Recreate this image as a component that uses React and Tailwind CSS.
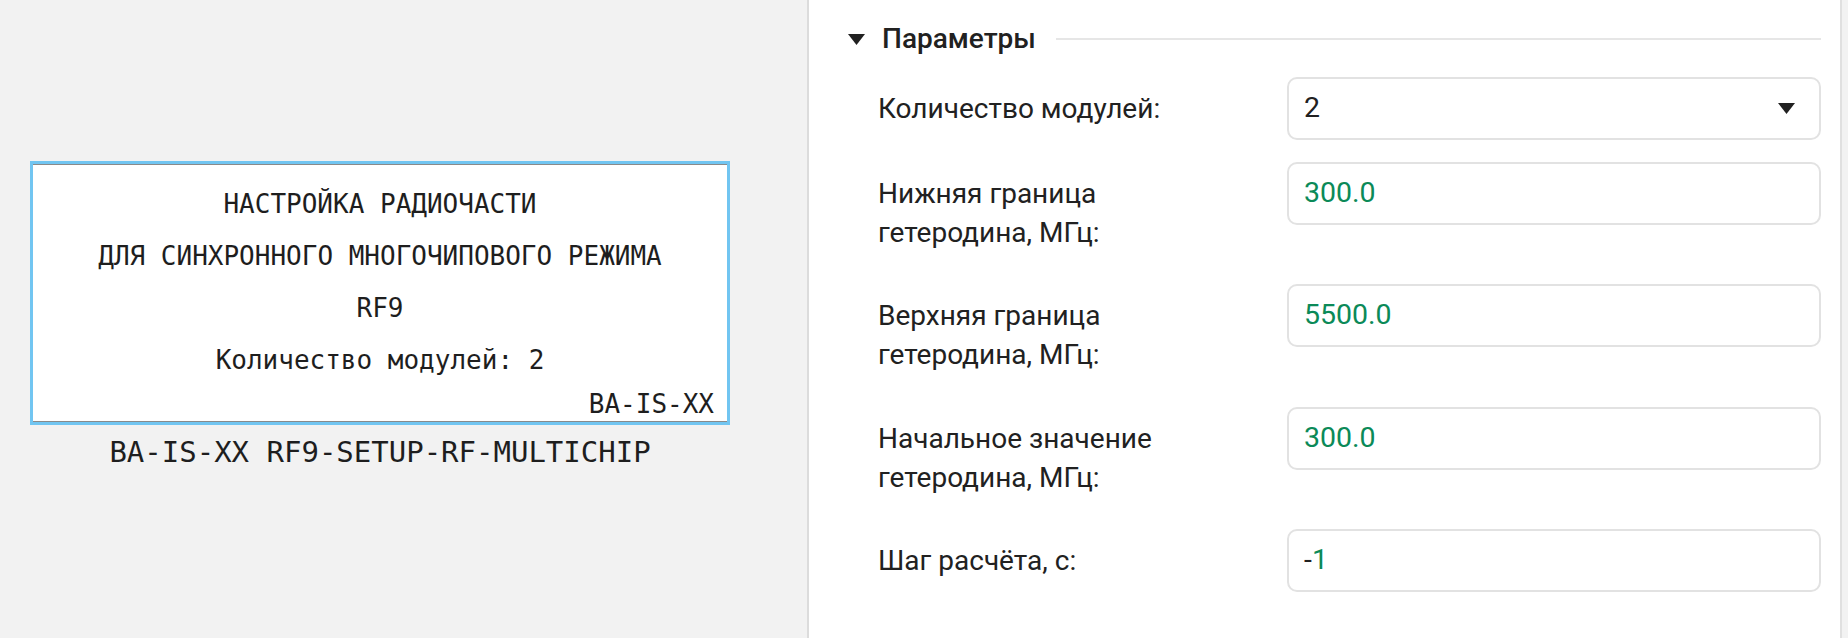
import React from "react";

const rows = [
  { label: ["Нижняя граница", "гетеродина, МГц:"], value: "300.0" },
  { label: ["Верхняя граница", "гетеродина, МГц:"], value: "5500.0" },
  { label: ["Начальное значение", "гетеродина, МГц:"], value: "300.0" },
];

function Caret({ className }) {
  return (
    <svg className={className} width="17" height="11" viewBox="0 0 17 11">
      <path d="M0 0 H17 L8.5 11 Z" fill="#212121" />
    </svg>
  );
}

function ScreenPreview() {
  return (
    <div className="flex flex-col items-center w-[700px]">
      <div className="w-[700px] h-[264px] border-[3px] border-[#71c5f1] bg-white">
        <div className="h-full border-y border-[#8a8a8a] flex flex-col pt-[13px] text-[#1e1e1e] text-[26px]" style={{ fontFamily: '"DejaVu Sans Mono", monospace' }}>
          <div className="text-center leading-[52px]">НАСТРОЙКА РАДИОЧАСТИ</div>
          <div className="text-center leading-[52px]">ДЛЯ СИНХРОННОГО МНОГОЧИПОВОГО РЕЖИМА</div>
          <div className="text-center leading-[52px]">RF9</div>
          <div className="text-center leading-[52px]">Количество модулей: 2</div>
          <div className="text-right leading-[36px] pr-[13px]">BA-IS-XX</div>
        </div>
      </div>
      <div className="mt-[8px] text-[29px] leading-[38px] text-[#1e1e1e]" style={{ fontFamily: '"DejaVu Sans Mono", monospace' }}>
        BA-IS-XX RF9-SETUP-RF-MULTICHIP
      </div>
    </div>
  );
}

function Field({ children }) {
  return (
    <div className="h-[63px] border-2 border-[#e2e2e2] rounded-[10px] bg-white flex items-center pl-[15px] pr-[24px] text-[28.5px]">
      {children}
    </div>
  );
}

export default function App() {
  return (
    <div className="flex h-[638px] w-[1848px] overflow-hidden bg-[#f2f2f2]" style={{ fontFamily: "Roboto, sans-serif" }}>
      <div className="w-[807px] shrink-0 pl-[30px] pt-[161px]">
        <ScreenPreview />
      </div>
      <div className="w-[2px] bg-[#dcdcdc]" />
      <div className="w-[1033px] bg-white border-r-2 border-[#e0e0e0] pt-[19px] pl-[39px] pr-[19px]">
        <div className="flex items-center h-[40px]">
          <Caret className="mr-[17px]" />
          <span className="text-[28px] font-medium text-[#212121]">Параметры</span>
          <div className="flex-1 h-[2px] bg-[#e6e6e6] ml-[20px]" />
        </div>
        <div className="mt-[18px] pl-[30px] flex flex-col gap-[21.5px] text-[#212121]">
          <div className="grid grid-cols-[409px_1fr] items-center">
            <div className="text-[28px] leading-[39px]">Количество модулей:</div>
            <Field>
              <span className="flex-1 text-[#212121]">2</span>
              <Caret />
            </Field>
          </div>
          {rows.map((r, i) => (
            <div key={i} className="grid grid-cols-[409px_1fr] items-start">
              <div className="text-[28px] leading-[39px] pt-[12px] pb-[11px]">
                {r.label[0]}
                <br />
                {r.label[1]}
              </div>
              <Field>
                <span className="text-[#0b8a58]">{r.value}</span>
              </Field>
            </div>
          ))}
          <div className="grid grid-cols-[409px_1fr] items-center">
            <div className="text-[28px] leading-[39px]">Шаг расчёта, с:</div>
            <Field>
              <span className="text-[#212121]">-</span>
              <span className="text-[#0b8a58]">1</span>
            </Field>
          </div>
        </div>
      </div>
      <div className="flex-1 bg-[#f2f2f2]" />
    </div>
  );
}
